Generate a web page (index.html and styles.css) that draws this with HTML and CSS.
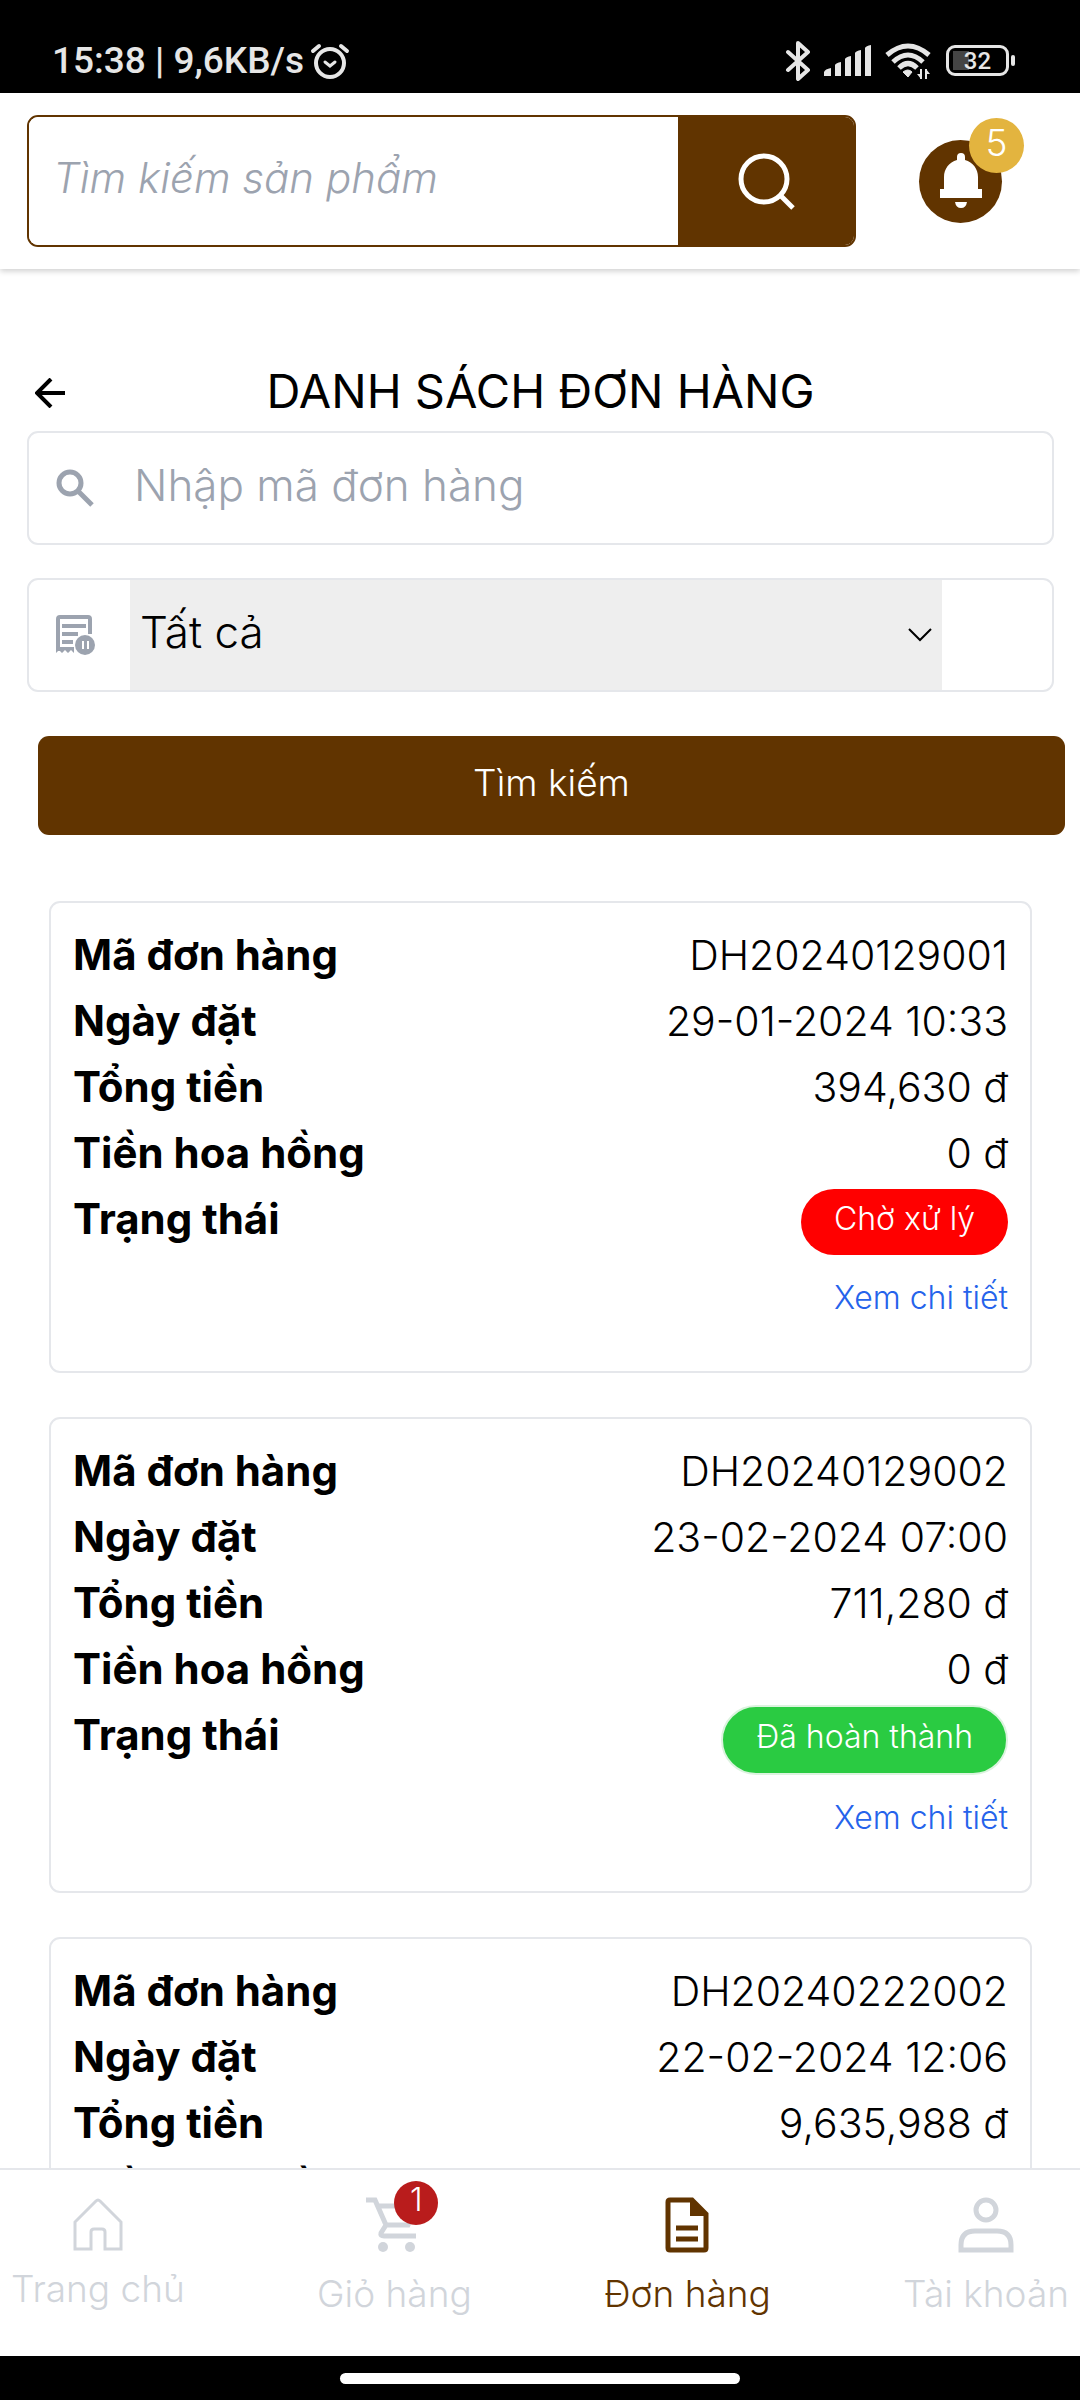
FILE: index.html
```
<!DOCTYPE html>
<html lang="vi">
<head>
    <meta charset="UTF-8">
    <meta name="viewport" content="width=device-width, initial-scale=1.0">
    <title>Danh sách đơn hàng</title>
    <link rel="stylesheet" href="styles.css">
</head>
<body>

    <div class="status">
        <div class="status-left">
            <span>15:38 | 9,6KB/s</span>
            <svg width="40" height="38" viewBox="0 0 40 38" fill="none" stroke="#e6e6e6" stroke-linecap="round">
                <circle cx="20" cy="21" r="14" stroke-width="4"/>
                <path d="M3 9l6-5M37 9l-6-5" stroke-width="4"/>
                <path d="M15 20l5 4 5-4" stroke-width="3"/>
            </svg>
        </div>
        <div class="status-right">
            <svg width="26" height="40" viewBox="0 0 26 40" fill="none" stroke="#e6e6e6" stroke-width="4" stroke-linejoin="round" stroke-linecap="round">
                <path d="M3 11l20 18-10 9V2l10 9L3 29"/>
            </svg>
            <svg width="48" height="32" viewBox="0 0 48 32" fill="#e6e6e6">
                <path d="M0 31v-4q1-3 7-4v8zM11 31V20q1-2 6-3v14zM21 31V14q1-2 6-3v20zM31 31V8q1-2 6-3v26zM41 31V3q1-2 6-3v31z"/>
            </svg>
            <svg width="46" height="36" viewBox="0 0 46 36" fill="none" stroke="#e6e6e6" stroke-width="5">
                <path d="M2 12Q23-6 44 12M8 19Q23 5 38 19M14 25Q23 16 32 25"/>
                <path d="M18 29q5-4 9 0l-4 5z" fill="#e6e6e6" stroke-width="1"/>
                <path d="M36 26v10M41 26v10" stroke-width="2"/>
                <path d="M32 31h4v5zM45 31h-4v-5z" fill="#e6e6e6" stroke="none"/>
            </svg>
            <div class="battery"><span>32</span></div>
        </div>
    </div>

    <header class="header">
        <form class="search">
            <input type="text" placeholder="Tìm kiếm sản phẩm" aria-label="Tìm kiếm sản phẩm">
            <button type="button" aria-label="Tìm">
                <svg width="58" height="58" viewBox="0 0 58 58" fill="none" stroke="#fff">
                    <circle cx="27" cy="27" r="23" stroke-width="5"/>
                    <path d="M43 43l13 13" stroke-width="5"/>
                </svg>
            </button>
        </form>
        <button class="bell" type="button" aria-label="Thông báo">
            <svg width="42" height="56" viewBox="0 0 42 56" fill="#fff">
                <path d="M17 7V4a4 4 0 0 1 8 0v3c8 2 13 9 13 17v12h4v9H0v-9h4V24C4 16 9 9 17 7z"/>
                <path d="M15 49h12q-1 6-6 6t-6-6z"/>
            </svg>
            <span class="bell-count">5</span>
        </button>
    </header>

    <main class="main">
        <div class="title">
            <button class="back" type="button" aria-label="Quay lại">
                <svg width="30" height="30" viewBox="0 0 30 30" fill="none" stroke="#000" stroke-width="4">
                    <path d="M16 1L2 15l14 14M2 15h28"/>
                </svg>
            </button>
            <h1>DANH SÁCH ĐƠN HÀNG</h1>
        </div>

        <form class="filter">
            <div class="field">
                <svg width="38" height="38" viewBox="0 0 38 38" fill="none" stroke="#9ca3af" stroke-width="5">
                    <circle cx="14" cy="14" r="11"/>
                    <path d="M23 23l13 13"/>
                </svg>
                <input type="text" placeholder="Nhập mã đơn hàng" aria-label="Mã đơn hàng">
            </div>
            <div class="field">
                <svg width="40" height="40" viewBox="0 0 40 40" fill="none" stroke="#9ca3af">
                    <path d="M2 36V4q0-2 2-2h28q2 0 2 2v15" stroke-width="4"/>
                    <path d="M6 11h24M6 19h16M6 27h11" stroke-width="4"/>
                    <path d="M0 32h18v6l-3-3-3 3-3-3-3 3-3-3-3 3z" fill="#9ca3af" stroke="none"/>
                    <circle cx="29" cy="30" r="10" fill="#9ca3af" stroke="none"/>
                    <path d="M27 26v8M32 26v8" stroke="#fff" stroke-width="2"/>
                </svg>
                <div class="pick">
                    <select aria-label="Trạng thái">
                        <option>Tất cả</option>
                        <option>Chờ xử lý</option>
                        <option>Đã hoàn thành</option>
                    </select>
                    <svg width="24" height="14" viewBox="0 0 24 14" fill="none" stroke="#000" stroke-width="2">
                        <path d="M1 1l11 11L23 1"/>
                    </svg>
                </div>
            </div>
            <button class="submit" type="button">Tìm kiếm</button>
        </form>

        <div class="list">
            <div class="card">
                <dl>
                    <div class="row"><dt>Mã đơn hàng</dt><dd>DH20240129001</dd></div>
                    <div class="row"><dt>Ngày đặt</dt><dd>29-01-2024 10:33</dd></div>
                    <div class="row"><dt>Tổng tiền</dt><dd>394,630 đ</dd></div>
                    <div class="row"><dt>Tiền hoa hồng</dt><dd>0 đ</dd></div>
                    <div class="row"><dt>Trạng thái</dt><dd class="tag wait">Chờ xử lý</dd></div>
                </dl>
                <a href="#">Xem chi tiết</a>
            </div>
            <div class="card">
                <dl>
                    <div class="row"><dt>Mã đơn hàng</dt><dd>DH20240129002</dd></div>
                    <div class="row"><dt>Ngày đặt</dt><dd>23-02-2024 07:00</dd></div>
                    <div class="row"><dt>Tổng tiền</dt><dd>711,280 đ</dd></div>
                    <div class="row"><dt>Tiền hoa hồng</dt><dd>0 đ</dd></div>
                    <div class="row"><dt>Trạng thái</dt><dd class="tag done">Đã hoàn thành</dd></div>
                </dl>
                <a href="#">Xem chi tiết</a>
            </div>
            <div class="card">
                <dl>
                    <div class="row"><dt>Mã đơn hàng</dt><dd>DH20240222002</dd></div>
                    <div class="row"><dt>Ngày đặt</dt><dd>22-02-2024 12:06</dd></div>
                    <div class="row"><dt>Tổng tiền</dt><dd>9,635,988 đ</dd></div>
                    <div class="row"><dt>Tiền hoa hồng</dt><dd>0 đ</dd></div>
                </dl>
            </div>
        </div>
    </main>

    <nav class="nav">
        <a href="#" class="home">
            <svg width="50" height="54" viewBox="0 0 50 54" fill="none" stroke="#d1d5db" stroke-width="3">
                <path d="M2 52V25L23 4q2-2 4 0l21 21v27H32V35q0-3-3-3h-8q-3 0-3 3v17z"/>
            </svg>
            <span>Trang chủ</span>
        </a>
        <a href="#">
            <span class="cart">
                <svg width="56" height="56" viewBox="0 0 56 56" fill="none" stroke="#d1d5db" stroke-width="5">
                    <path d="M0 3h9l11 25M12 9h38L42 28H20l-5 8q-1 3 3 3h32"/>
                    <circle cx="17" cy="50" r="5" fill="#d1d5db" stroke="none"/>
                    <circle cx="44" cy="50" r="5" fill="#d1d5db" stroke="none"/>
                </svg>
                <span class="cart-count">1</span>
            </span>
            <span>Giỏ hàng</span>
        </a>
        <a href="#" class="active">
            <svg width="44" height="56" viewBox="0 0 44 56" fill="none" stroke="#613400" stroke-width="5">
                <path d="M5 3h22l14 14v34q0 2-2 2H5q-2 0-2-2V5q0-2 2-2z"/>
                <path d="M25 3v16h16z" fill="#613400" stroke="none"/>
                <path d="M11 31h22M11 42h22"/>
            </svg>
            <span>Đơn hàng</span>
        </a>
        <a href="#">
            <svg width="56" height="56" viewBox="0 0 56 56" fill="none" stroke="#d1d5db" stroke-width="5">
                <circle cx="28" cy="13" r="10"/>
                <path d="M3 53V48Q3 34 17 34h22q14 0 14 14v5z"/>
            </svg>
            <span>Tài khoản</span>
        </a>
    </nav>
    <div class="gesture"></div>

</body>
</html>
```
FILE: styles.css
```
*{
    margin: 0px;
    padding: 0px;
    box-sizing: border-box;
    font-family: Inter, sans-serif;
}
body{
    display: flex;
    flex-direction: column;
    height: 100vh;
    overflow: hidden;
    background-color: white;
    color: black;
    font-weight: 300;
}
svg{
    display: block;
    flex-shrink: 0;
}
button{
    border: none;
    cursor: pointer;
    font-weight: 300;
}
a{
    text-decoration: none;
}
.status{
    display: flex;
    justify-content: space-between;
    align-items: center;
    height: 93px;
    flex-shrink: 0;
    padding: 28px 71px 0px 52px;
    background-color: black;
    color: #e6e6e6;
}
.status span{
    font-family: Roboto, sans-serif;
    font-size: 37px;
    font-weight: 500;
}
.status-left{
    display: flex;
    align-items: center;
    gap: 6px;
}
.status-right{
    display: flex;
    align-items: center;
    gap: 13px;
}
.battery{
    position: relative;
    width: 63px;
    height: 31px;
    border: 3px solid #e6e6e6;
    border-radius: 9px;
    margin-left: 2px;
    text-align: center;
    background: linear-gradient(#444, #444) 4px 3px / 16px 19px no-repeat;
}
.battery span{
    display: block;
    font-size: 24px;
    line-height: 26px;
}
.battery::after{
    content: "";
    position: absolute;
    right: -9px;
    top: 7px;
    width: 4px;
    height: 11px;
    border-radius: 2px;
    background-color: #e6e6e6;
}
.header{
    display: flex;
    align-items: center;
    flex-shrink: 0;
    padding: 22px 78px 22px 27px;
    gap: 63px;
    box-shadow: 0px 2px 6px rgba(0, 0, 0, 0.2);
}
.search{
    display: flex;
    flex: 1;
    height: 132px;
    border: 2px solid #613400;
    border-radius: 11px;
    overflow: hidden;
}
.search input{
    flex: 1;
    min-width: 0px;
    border: none;
    padding: 0px 24px 8px;
    font-size: 42px;
    font-weight: 300;
    font-style: italic;
}
.search input::placeholder, .field input::placeholder{
    color: #9ca3af;
}
.search button{
    display: flex;
    justify-content: center;
    align-items: center;
    width: 176px;
    background-color: #613400;
}
.bell{
    position: relative;
    display: flex;
    justify-content: center;
    align-items: center;
    width: 83px;
    height: 83px;
    border-radius: 50%;
    background-color: #613400;
}
.bell-count{
    position: absolute;
    top: -22px;
    right: -22px;
    width: 55px;
    height: 55px;
    border-radius: 50%;
    background-color: #e3b43f;
    color: white;
    font-size: 37px;
    line-height: 50px;
}
.main{
    flex: 1;
    min-height: 0px;
    overflow: hidden;
    padding: 86px 26px 0px 27px;
}
.title{
    display: flex;
    align-items: center;
    height: 76px;
    padding: 0px 8px;
}
.title h1{
    flex: 1;
    padding: 0px 30px 6px 0px;
    text-align: center;
    font-size: 47px;
    font-weight: 400;
}
.back{
    background: none;
}
.field{
    display: flex;
    align-items: center;
    height: 114px;
    margin-bottom: 33px;
    padding-left: 27px;
    border: 2px solid #e5e7eb;
    border-radius: 11px;
}
.field input{
    flex: 1;
    min-width: 0px;
    border: none;
    margin-left: 40px;
    padding-bottom: 6px;
    font-size: 44px;
    font-weight: 300;
}
.pick{
    display: flex;
    align-items: center;
    flex: 1;
    align-self: stretch;
    margin: 0px 110px 0px 34px;
    padding-right: 10px;
    background-color: #eeeeee;
}
.pick select{
    flex: 1;
    align-self: stretch;
    appearance: none;
    border: none;
    background: none;
    padding: 0px 10px 6px;
    color: black;
    font-size: 44px;
    font-weight: 300;
}
.submit{
    display: block;
    width: 100%;
    height: 99px;
    margin: 44px 0px 66px 11px;
    padding-bottom: 6px;
    border-radius: 11px;
    background-color: #613400;
    color: white;
    font-size: 37px;
}
.list{
    display: flex;
    flex-direction: column;
    gap: 44px;
    padding: 0px 22px;
}
.card{
    display: flex;
    flex-direction: column;
    align-items: flex-end;
    padding: 22px 22px 52px;
    border: 2px solid #e5e7eb;
    border-radius: 11px;
}
.card dl{
    width: 100%;
}
.row{
    display: flex;
    justify-content: space-between;
    min-height: 66px;
    font-size: 41px;
    line-height: 60px;
}
.row dt{
    font-size: 42px;
    font-weight: 700;
}
.row .tag{
    height: 66px;
    padding: 0px 33px;
    border-radius: 35px;
    color: white;
    font-size: 32px;
}
.wait{
    background-color: #ff0000;
}
.row .done{
    height: 70px;
    border: 2px solid #dcf3df;
    background-color: #2acb42;
}
.card a{
    margin-top: 22px;
    color: #2563eb;
    font-size: 32px;
    line-height: 42px;
}
.nav{
    display: flex;
    justify-content: space-between;
    flex-shrink: 0;
    height: 188px;
    padding: 27px 11px 0px;
    border-top: 2px solid #e5e7eb;
}
.nav a{
    display: flex;
    flex-direction: column;
    align-items: center;
    gap: 19px;
    color: #d1d5db;
    font-size: 37px;
    line-height: 44px;
}
.nav .home{
    gap: 16px;
}
.nav .active{
    color: #613400;
}
.cart{
    position: relative;
}
.cart-count{
    position: absolute;
    top: -16px;
    right: -16px;
    width: 44px;
    height: 44px;
    border-radius: 50%;
    background-color: #b91c1c;
    color: white;
    text-align: center;
    font-size: 32px;
    line-height: 38px;
}
.gesture{
    display: flex;
    justify-content: center;
    align-items: center;
    flex-shrink: 0;
    height: 44px;
    background-color: black;
}
.gesture::after{
    content: "";
    width: 37%;
    height: 11px;
    border-radius: 6px;
    background-color: white;
}
```
